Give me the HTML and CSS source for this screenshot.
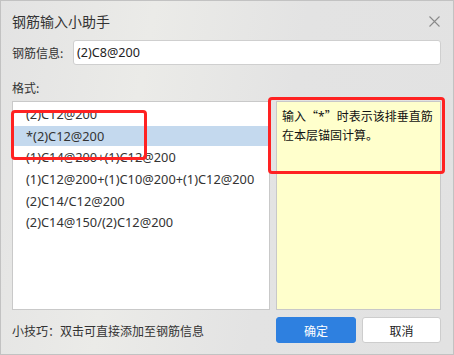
FILE: index.html
```html
<!DOCTYPE html>
<html lang="zh-CN">
<head>
<meta charset="utf-8">
<title>钢筋输入小助手</title>
<link rel="stylesheet" href="styles.css">
</head>
<body>
<div class="window">
  <div class="titlebar">
    <span class="title">钢筋输入小助手</span>
    <svg class="close" width="11" height="11" viewBox="0 0 11 11"><path d="M0.5 0.5L10.5 10.5M10.5 0.5L0.5 10.5" stroke="#8a8a8a" stroke-width="1.1" fill="none"/></svg>
  </div>
  <div class="info-row">
    <span class="label">钢筋信息:</span>
    <div class="input">(2)C8@200</div>
  </div>
  <div class="format-label">格式:</div>
  <div class="main">
    <div class="list">
      <div class="item">(2)C12@200</div>
      <div class="item selected">*(2)C12@200</div>
      <div class="item">(1)C14@200+(1)C12@200</div>
      <div class="item">(1)C12@200+(1)C10@200+(1)C12@200</div>
      <div class="item">(2)C14/C12@200</div>
      <div class="item">(2)C14@150/(2)C12@200</div>
    </div>
    <div class="note">输入<span class="fw">“</span><span class="star">*</span><span class="fw">”</span>时表示该排垂直筋<br>在本层锚固计算。</div>
  </div>
  <div class="footer">
    <span class="tip">小技巧：双击可直接添加至钢筋信息</span>
    <button class="btn btn-primary">确定</button>
    <button class="btn btn-cancel">取消</button>
  </div>
  <div class="mark mark-list"></div>
  <div class="mark mark-note"></div>
</div>
</body>
</html>
```

FILE: styles.css
```css
html, body {
  margin: 0;
  padding: 0;
}
body {
  font-family: "Noto Sans", "Noto Sans CJK SC", sans-serif;
  color: #333;
  background: #e4e4e4;
}
.window {
  position: relative;
  width: 454px;
  height: 355px;
  box-sizing: border-box;
  border: 1px solid #c2c2c2;
  padding: 0 12px 0 11px;
  background: linear-gradient(100deg, #e3e3e3 0%, #ebebe8 30%, #e3e3e3 60%, #e2e2e2 100%);
  display: flex;
  flex-direction: column;
}
.titlebar {
  height: 39px;
  display: flex;
  align-items: center;
  justify-content: space-between;
}
.title {
  font-family: "Noto Sans CJK SC", sans-serif;
  font-size: 14px;
  color: #333;
}
.close {
  margin-right: 1px;
  margin-top: 1px;
}
.info-row {
  height: 25px;
  display: flex;
  align-items: center;
}
.label {
  width: 61px;
  font-family: "Noto Sans CJK SC", sans-serif;
  font-size: 12px;
  color: #333;
}
.input {
  flex: 1;
  height: 25px;
  box-sizing: border-box;
  border: 1px solid #cfcfcf;
  border-radius: 3px;
  background: #fff;
  padding-left: 3px;
  font-size: 12.6px;
  line-height: 23px;
  color: #222;
}
.format-label {
  margin-top: 14px;
  height: 18px;
  line-height: 18px;
  font-family: "Noto Sans CJK SC", sans-serif;
  font-size: 12px;
  color: #333;
}
.main {
  margin-top: 4px;
  height: 209px;
  display: grid;
  grid-template-columns: 258px 1fr;
  column-gap: 6px;
}
.list {
  box-sizing: border-box;
  border: 1px solid #c9c9c9;
  background: #fff;
  padding-top: 2px;
  display: flex;
  flex-direction: column;
  gap: 1.67px;
  overflow: hidden;
}
.item {
  height: 20px;
  line-height: 20px;
  padding-left: 13px;
  font-size: 12.8px;
  color: #333;
  white-space: nowrap;
}
.item.selected {
  background: #c4d9ee;
}
.note {
  box-sizing: border-box;
  border: 1px solid #c8c8c8;
  background: #ffffcc;
  padding: 5px 5px;
  font-family: "Noto Sans CJK SC", sans-serif;
  font-size: 12px;
  line-height: 18px;
  color: #111;
  white-space: nowrap;
}
.fw {
  font-variant-east-asian: full-width;
}
.star {
  font-family: "Noto Sans", sans-serif;
}
.footer {
  margin-top: 7px;
  height: 26px;
  display: flex;
  align-items: center;
}
.tip {
  flex: 1;
  font-family: "Noto Sans CJK SC", sans-serif;
  font-size: 12px;
  color: #333;
}
.btn {
  height: 26px;
  box-sizing: border-box;
  border-radius: 3px;
  font-family: "Noto Sans CJK SC", sans-serif;
  font-size: 12px;
  padding: 0;
  margin: 0;
}
.btn-primary {
  width: 80px;
  background: #2e80e0;
  border: 1px solid #2e80e0;
  color: #fff;
}
.btn-cancel {
  width: 79px;
  margin-left: 6px;
  background: #fff;
  border: 1px solid #cdcdcd;
  color: #222;
}
.mark {
  position: absolute;
  box-sizing: border-box;
  border: 3px solid #ff2222;
  border-radius: 4px;
}
.mark-list {
  left: 10px;
  top: 109px;
  width: 136px;
  height: 50px;
}
.mark-note {
  left: 267px;
  top: 96px;
  width: 177px;
  height: 77px;
}
```
